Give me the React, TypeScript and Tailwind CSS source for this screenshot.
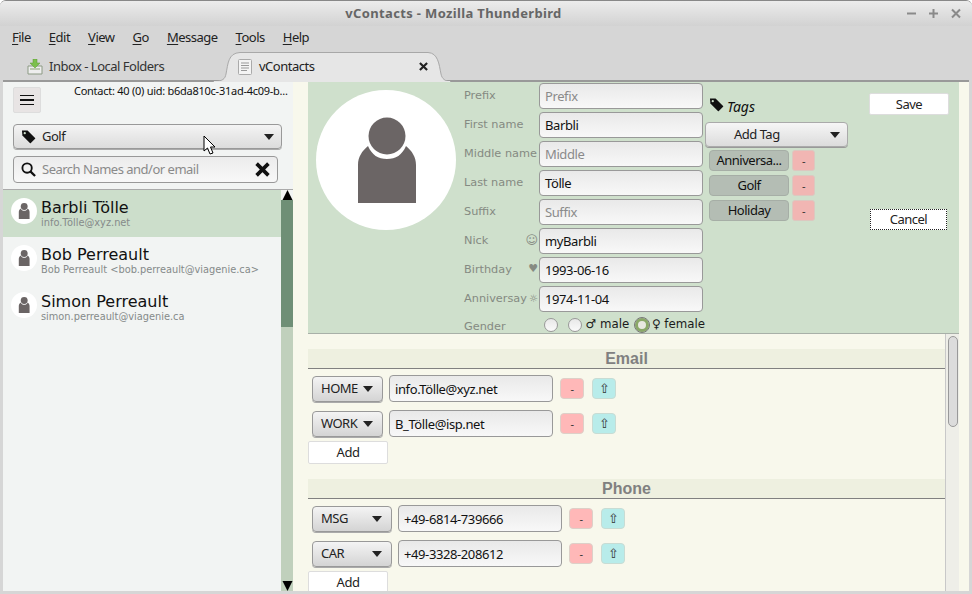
import React from "react";

const Person = ({ className }: { className?: string }) => (
  <svg viewBox="0 0 140 140" className={className}>
    <path d="M42 113 V75 C42 67 46 61 52 56 C56 65 62 69 71 69 C80 69 86 65 90 56 C96 61 100 67 100 75 V113 Z" fill="#6b6565" />
    <circle cx="71" cy="46" r="18.5" fill="#6b6565" />
  </svg>
);

const Arrow = ({ className = "" }: { className?: string }) => (
  <svg viewBox="0 0 10 6" className={`w-[10px] h-[6px] shrink-0 ${className}`}><path d="M0 0H10L5 6Z" fill="#222" /></svg>
);

const TagIcon = ({ className = "" }: { className?: string }) => (
  <svg viewBox="0 0 16 16" className={className}>
    <path d="M1 1.5 H7 L15 9.5 Q15.5 10 15 10.5 L10.5 15 Q10 15.5 9.5 15 L1.5 7 Z" fill="#111" />
    <circle cx="4" cy="4.5" r="1.2" fill="#cfe0cc" />
  </svg>
);

const inputCls =
  "h-[26px] rounded-[4px] border border-[#999] bg-gradient-to-b from-[#e9e9e9] to-[#f8f8f8] px-[5px] text-[13px] leading-[24px] tracking-[-0.4px] flex items-center";

const FormRow = ({ label, value, ph, icon }: { label: string; value?: string; ph?: string; icon?: React.ReactNode }) => (
  <div className="flex h-[26px] mb-[3px]">
    <div className="w-[75px] relative flex items-start pt-[6px] text-[11.3px] leading-[14px] text-[#858a82] tracking-normal [font-family:'DejaVu_Sans',sans-serif] whitespace-nowrap">
      {label}
      {icon}
    </div>
    <div className={`${inputCls} w-[164px] ${value ? "text-[#111]" : "text-[#8a8a8a]"}`}>{value ?? ph}</div>
  </div>
);

const Mn = ({ k, r }: { k: string; r: string }) => (
  <span>
    <span className="underline underline-offset-2">{k}</span>
    {r}
  </span>
);

const ContactItem = ({ name, sub, active }: { name: string; sub: string; active?: boolean }) => (
  <div className={`h-[47px] flex items-start pl-[8px] pt-[8px] ${active ? "bg-[#ccdecb]" : ""}`}>
    <div className="w-[26px] h-[26px] rounded-full bg-white flex items-center justify-center shrink-0">
      <Person className="w-[26px] h-[26px]" />
    </div>
    <div className="ml-[4px] tracking-normal [font-family:'DejaVu_Sans',sans-serif] whitespace-nowrap">
      <div className="text-[16px] leading-[19px] text-[#111]">{name}</div>
      <div className="text-[9.8px] leading-[11px] text-[#858a8a]">{sub}</div>
    </div>
  </div>
);

const TagRow = ({ name }: { name: string }) => (
  <div className="flex h-[21px] mb-[4px] ml-[4px]">
    <div className="w-[80px] rounded-[4px] border border-[#a6aea6] bg-[#b4bdb4] text-[13px] leading-[19px] text-center text-[#111]">{name}</div>
    <div className="w-[23px] ml-[3px] rounded-[3px] bg-[#f1b6b3] border border-[#dcc8c0] text-[11px] leading-[19px] text-center text-[#333]">-</div>
  </div>
);

const FieldRow = ({ type, value, selW }: { type: string; value: string; selW: number }) => (
  <div className="flex items-center h-[27px] mb-[8px] pl-[4px]">
    <div
      style={{ width: selW }}
      className="h-[26px] shrink-0 rounded-[4px] border border-[#999] shadow-[0_1px_0_#aaa] bg-gradient-to-b from-[#f4f4f4] to-[#d4d4d4] flex items-center justify-between pl-[8px] pr-[9px] text-[13px] text-[#222]"
    >
      <span>{type}</span>
      <Arrow />
    </div>
    <div className={`${inputCls} ml-[6px] w-[164px] h-[27px] text-[#111]`}>{value}</div>
    <div className="ml-[7px] w-[24px] h-[21px] rounded-[4px] bg-[#ffb8b8] border border-[#ddd0c8] text-[11px] leading-[19px] text-center text-[#333]">-</div>
    <div className="ml-[8px] w-[24px] h-[21px] rounded-[4px] bg-[#b8ecea] border border-[#c8dcd4] text-[13px] leading-[19px] text-center text-[#333] tracking-normal">⇧</div>
  </div>
);

const WhiteBtn = ({ label, className = "" }: { label: string; className?: string }) => (
  <div className={`bg-white border border-[#ddd] rounded-[2px] text-[13px] text-center text-[#222] ${className}`}>{label}</div>
);

const SectionHead = ({ title }: { title: string }) => (
  <div className="h-[20px] bg-[#eef0e0] border-b border-[#808080] text-center text-[16px] leading-[19px] font-bold text-[#808080] tracking-normal [font-family:'Liberation_Sans',sans-serif] mb-[6px]">
    {title}
  </div>
);

export default function App() {
  return (
    <div className="relative w-[972px] h-[594px] overflow-hidden flex flex-col bg-[#d6d6d6] tracking-[-0.5px] [font-family:'Noto_Sans',sans-serif] rounded-t-[6px] border-t border-[#888]">
      {/* Title bar */}
      <div className="h-[25px] shrink-0 bg-gradient-to-b from-[#ececec] to-[#d2d2d2] flex items-center relative">
        <div className="flex-1 text-center text-[13px] font-bold text-[#666] pr-[65px] tracking-[0.35px]">
          vContacts - Mozilla Thunderbird
        </div>
        <div className="absolute right-[10px] top-[6px] flex gap-[10px] items-center">
          <svg viewBox="0 0 12 12" className="w-[12px] h-[12px]"><path d="M1 6.5H10" stroke="#8a8a8a" strokeWidth="2" /></svg>
          <svg viewBox="0 0 12 12" className="w-[12px] h-[12px]"><path d="M1 6.5H10M5.5 2V11" stroke="#8a8a8a" strokeWidth="2" /></svg>
          <svg viewBox="0 0 12 12" className="w-[12px] h-[12px]"><path d="M2 2.5L10 10.5M10 2.5L2 10.5" stroke="#8a8a8a" strokeWidth="2" /></svg>
        </div>
      </div>

      {/* Menu */}
      <div className="h-[24px] shrink-0 flex items-center pl-[12px] gap-[18px] text-[13px] text-[#222]">
        <Mn k="F" r="ile" />
        <Mn k="E" r="dit" />
        <Mn k="V" r="iew" />
        <Mn k="G" r="o" />
        <Mn k="M" r="essage" />
        <Mn k="T" r="ools" />
        <Mn k="H" r="elp" />
      </div>

      {/* Tabs */}
      <div className="h-[32px] shrink-0 flex items-end pl-[3px] pr-[3px]">
        <div className="flex-1 h-[32px] border-b-[2px] border-[#999] relative flex">
          <div className="w-[222px] h-[32px] pt-[1px] flex items-center pl-[24px] text-[13px] text-[#333]">
            <svg viewBox="0 0 16 16" className="w-[16px] h-[16px] mr-[6px]">
              <path d="M1 7H15V15H1Z" fill="#eee" stroke="#8c9a84" />
              <path d="M3 9H13V11H3Z" fill="#bcc8b0" />
              <path d="M6 0H10V4H13L8 9L3 4H6Z" fill="#7cc04c" stroke="#5a9a30" strokeWidth="0.5" />
            </svg>
            Inbox - Local Folders
          </div>
          <svg viewBox="0 0 246 32" className="absolute left-[207px] top-0 w-[246px] h-[32px]">
            <path d="M3 32 C13 31 15 29 16 24 C18 14 18 3 30 2.5 H218 C228 3 229 14 231 24 C232 29 235 31 241 32 Z" fill="#e6e6e6" stroke="#a8a8a8" />
            <path d="M4 32 H240" stroke="#e6e6e6" strokeWidth="2" />
          </svg>
          <div className="absolute left-[222px] top-[2px] w-[216px] h-[30px] flex items-center pl-[12px] text-[13px] text-[#222]">
            <svg viewBox="0 0 16 16" className="w-[16px] h-[16px] mr-[6px]">
              <rect x="1.5" y="0.5" width="13" height="15" rx="1" fill="#f4f4f4" stroke="#aaa" />
              <path d="M4 4H12M4 6.5H12M4 9H12M4 11.5H10" stroke="#999" />
            </svg>
            vContacts
            <svg viewBox="0 0 10 10" className="w-[9px] h-[9px] absolute right-[13px] top-[10px]">
              <path d="M1 1L9 9M9 1L1 9" stroke="#222" strokeWidth="2.4" />
            </svg>
          </div>
        </div>
      </div>

      {/* Body */}
      <div className="flex-1 min-h-0 flex pl-[3px] pr-[3px] pb-[3px] text-[#222]">
        {/* left */}
        <div className="w-[290px] shrink-0 flex flex-col bg-[#f2f4f3]">
          <div className="relative h-[107px] shrink-0 pl-[10px] pt-[5px]">
            <div className="flex items-start">
              <div className="w-[28px] h-[26px] rounded-[2px] border border-[#ddd] bg-[#e8e4e4] flex flex-col gap-[3px] items-center justify-center">
                <span className="w-[14px] h-[1.5px] bg-[#111]" />
                <span className="w-[14px] h-[1.5px] bg-[#111]" />
                <span className="w-[14px] h-[1.5px] bg-[#111]" />
              </div>
              <div className="ml-[33px] -mt-[4px] text-[11px] leading-[16px] text-[#111] whitespace-nowrap tracking-[-0.26px]">
                Contact: 40 (0) uid: b6da810c-31ad-4c09-b...
              </div>
            </div>
            <div className="mt-[11px] w-[269px] h-[25px] rounded-[4px] border border-[#999] bg-gradient-to-b from-[#f4f4f4] to-[#dcdcdc] shadow-[0_1px_0_#aaa] flex items-center pl-[7px] pr-[7px] text-[13px]">
              <TagIcon className="w-[15px] h-[15px] mr-[6px]" />
              <span className="flex-1">Golf</span>
              <Arrow />
            </div>
            <div className="mt-[7px] w-[265px] h-[27px] rounded-[4px] border border-[#999] bg-gradient-to-b from-[#ececec] to-[#f8f8f8] flex items-center pl-[7px] pr-[7px] text-[13px] text-[#8a8a8a]">
              <svg viewBox="0 0 16 16" className="w-[15px] h-[15px] mr-[6px]">
                <circle cx="6.5" cy="6.5" r="5" fill="none" stroke="#111" strokeWidth="2" />
                <path d="M10 10L15 15" stroke="#111" strokeWidth="2.4" />
              </svg>
              <span className="flex-1">Search Names and/or email</span>
              <svg viewBox="0 0 14 14" className="w-[15px] h-[15px]">
                <path d="M1.5 1.5L12.5 12.5M12.5 1.5L1.5 12.5" stroke="#111" strokeWidth="3.4" />
              </svg>
            </div>
          </div>
          <div className="flex-1 min-h-0 flex border-t border-[#aaa]">
            <div className="w-[278px] flex flex-col">
              <ContactItem name="Barbli Tölle" sub="info.Tölle@xyz.net" active />
              <ContactItem name="Bob Perreault" sub="Bob Perreault <bob.perreault@viagenie.ca>" />
              <ContactItem name="Simon Perreault" sub="simon.perreault@viagenie.ca" />
            </div>
            <div className="w-[12px] bg-[#c0d0bc] flex flex-col">
              <div className="h-[10px] bg-[#f2f4f3] flex justify-center items-end">
                <svg viewBox="0 0 10 10" className="w-[11px] h-[10px]"><path d="M5 0L10 10H0Z" fill="#000" /></svg>
              </div>
              <div className="h-[127px] bg-[#6f8f76]" />
              <div className="flex-1" />
              <div className="h-[10px] flex justify-center">
                <svg viewBox="0 0 10 10" className="w-[11px] h-[10px]"><path d="M0 0H10L5 10Z" fill="#000" /></svg>
              </div>
            </div>
          </div>
        </div>

        {/* gap */}
        <div className="w-[15px] shrink-0 bg-[#f8f8ec]" />

        {/* right */}
        <div className="flex-1 min-w-0 flex flex-col bg-[#f8f8ec]">
          <div className="h-[252px] shrink-0 w-[651px] bg-[#cfe0cc] border-b border-[#a8b0a8] flex">
            <div className="w-[156px] shrink-0 pl-[8px] pt-[8px]">
              <div className="w-[140px] h-[140px] rounded-full bg-white">
                <Person className="w-[140px] h-[140px]" />
              </div>
            </div>
            <div className="w-[241px] shrink-0 pt-[1px]">
              <FormRow label="Prefix" ph="Prefix" />
              <FormRow label="First name" value="Barbli" />
              <FormRow label="Middle name" ph="Middle" />
              <FormRow label="Last name" value="Tölle" />
              <FormRow label="Suffix" ph="Suffix" />
              <FormRow label="Nick" value="myBarbli" icon={<span className="absolute right-[1px] top-[5px] text-[12px] leading-[14px]">☺</span>} />
              <FormRow label="Birthday" value="1993-06-16" icon={<span className="absolute right-[1px] top-[5px] text-[11px] leading-[14px]">♥</span>} />
              <FormRow label="Anniversay" value="1974-11-04" icon={<span className="absolute right-[1px] top-[6px] text-[10px] leading-[14px]">☼</span>} />
              <div className="flex items-center h-[14px] mt-[6px] tracking-normal [font-family:'DejaVu_Sans',sans-serif] text-[11.8px] text-[#1a1a1a] whitespace-nowrap">
                <span className="w-[81px] text-[11.3px] text-[#858a82] pt-[5px] mr-[2px]">Gender</span>
                <span className="w-[14px] h-[14px] rounded-full border border-[#999] bg-gradient-to-b from-[#e8e8e8] to-[#fafafa]" />
                <span className="ml-[10px] w-[14px] h-[14px] rounded-full border border-[#999] bg-gradient-to-b from-[#e8e8e8] to-[#fafafa]" />
                <span className="ml-[4px]">♂ male</span>
                <span className="ml-[6px] w-[14px] h-[14px] rounded-full border-[3px] border-[#8aa868] bg-[#e8e8e0] outline outline-1 outline-[#777]" />
                <span className="ml-[3px]">♀ female</span>
              </div>
            </div>
            <div className="w-[164px] shrink-0 pt-[15px]">
              <div className="flex items-center h-[16px] ml-[4px]">
                <TagIcon className="w-[15px] h-[15px] -mt-[1px]" />
                <span className="ml-[3px] mt-[3px] italic text-[14px] tracking-normal leading-[16px] text-[#111]">Tags</span>
              </div>
              <div className="mt-[9px] w-[143px] h-[25px] rounded-[4px] border border-[#aaa] shadow-[0_1px_0_#999] bg-gradient-to-b from-[#f6f6f6] to-[#dcdcdc] flex items-center justify-between pl-[28px] pr-[7px] text-[13px]">
                <span>Add Tag</span>
                <Arrow />
              </div>
              <div className="mt-[3px]">
                <TagRow name="Anniversa..." />
                <TagRow name="Golf" />
                <TagRow name="Holiday" />
              </div>
            </div>
            <div className="flex-1 pt-[11px] flex flex-col">
              <WhiteBtn label="Save" className="w-[80px] h-[22px] leading-[20px]" />
              <div className="mt-[94px] ml-[1px] w-[77px] h-[21px] bg-white border border-dotted border-[#222] text-[13px] leading-[19px] text-center text-[#222]">
                Cancel
              </div>
            </div>
          </div>

          <div className="flex-1 min-h-0 flex w-[651px]">
            <div className="w-[637px] shrink-0 pt-[15px] overflow-hidden">
              <SectionHead title="Email" />
              <FieldRow type="HOME" value="info.Tölle@xyz.net" selW={71} />
              <FieldRow type="WORK" value="B_Tölle@isp.net" selW={71} />
              <WhiteBtn label="Add" className="w-[80px] h-[23px] leading-[21px] -mt-[4px]" />
              <div className="h-[15px]" />
              <SectionHead title="Phone" />
              <FieldRow type="MSG" value="+49-6814-739666" selW={80} />
              <FieldRow type="CAR" value="+49-3328-208612" selW={80} />
              <WhiteBtn label="Add" className="w-[80px] h-[23px] leading-[21px] -mt-[4px]" />
            </div>
            <div className="w-[14px] shrink-0 border-l border-[#c8c8c8] bg-[#eeeee8] pt-[2px] flex justify-center">
              <div className="w-[10px] h-[91px] rounded-full border border-[#999] bg-[#dcdcdc]" />
            </div>
          </div>
        </div>
      </div>

      {/* cursor overlay */}
      <svg viewBox="0 0 14 20" className="absolute left-[203px] top-[134px] w-[14px] h-[20px]">
        <path d="M1 1V16L4.5 13L7 19L10 18L7.5 12H12Z" fill="#fff" stroke="#000" strokeWidth="1" />
      </svg>
    </div>
  );
}
